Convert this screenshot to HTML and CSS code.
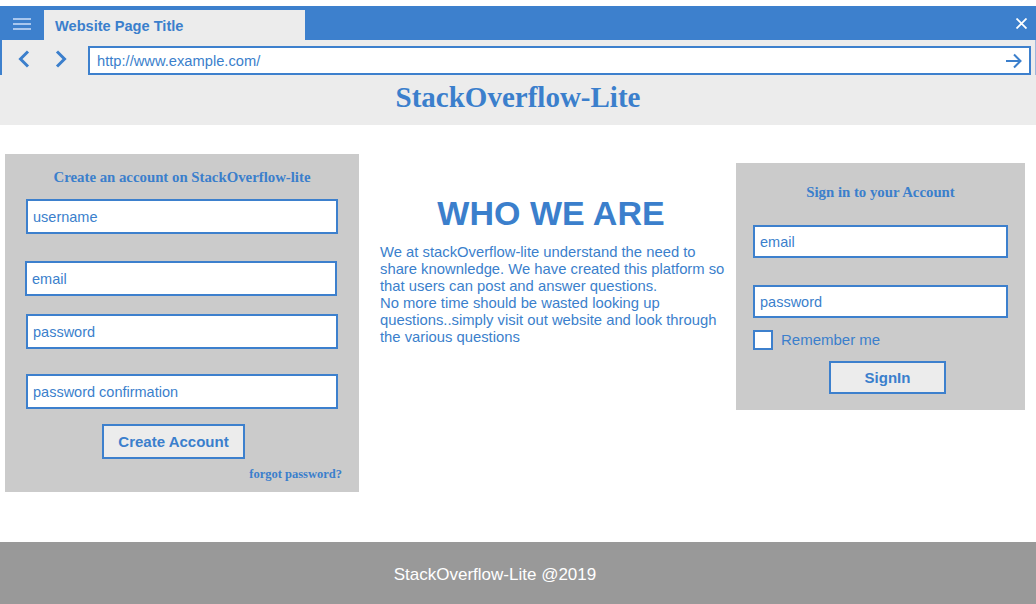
FILE: index.html
```html
<!DOCTYPE html>
<html>
<head>
<meta charset="utf-8">
<title>StackOverflow-Lite</title>
<link rel="stylesheet" href="styles.css">
</head>
<body>
<div class="chrome">
  <div class="titlebar">
    <div class="menu">
      <svg width="18" height="14" viewBox="0 0 18 14"><path d="M0 2h18M0 7h18M0 12h18" stroke="#a9c7ee" stroke-width="2"/></svg>
    </div>
    <div class="tab">Website Page Title</div>
    <div class="close">
      <svg width="11" height="11" viewBox="0 0 11 11"><path d="M0.5 0.5l10 10M10.5 0.5l-10 10" stroke="#fff" stroke-width="1.8"/></svg>
    </div>
  </div>
  <div class="navbar">
    <div class="navbtns">
      <svg width="14" height="18" viewBox="0 0 14 18"><path d="M11 1.5L3.5 9L11 16.5" fill="none" stroke="#3b7fcc" stroke-width="3"/></svg>
      <svg width="14" height="18" viewBox="0 0 14 18"><path d="M3 1.5L10.5 9L3 16.5" fill="none" stroke="#3b7fcc" stroke-width="3"/></svg>
    </div>
    <div class="url">
      <span>http://www.example.com/</span>
      <svg width="16" height="16" viewBox="0 0 16 16"><path d="M0 8h14M8 1.5L14.5 8L8 14.5" fill="none" stroke="#3b7fcc" stroke-width="2"/></svg>
    </div>
  </div>
</div>
<header class="site-header">StackOverflow-Lite</header>
<main class="content">
  <section class="card card-signup">
    <h2 class="card-title">Create an account on StackOverflow-lite</h2>
    <div class="field f-user">username</div>
    <div class="field f-email">email</div>
    <div class="field f-pass">password</div>
    <div class="field f-conf">password confirmation</div>
    <div class="btn btn-create">Create Account</div>
    <div class="forgot">forgot password?</div>
  </section>
  <section class="about">
    <h1 class="about-title">WHO WE ARE</h1>
    <p class="about-text">We at stackOverflow-lite understand the need to share knownledge. We have created this platform so that users can post and answer questions.<br>No more time should be wasted looking up questions..simply visit out website and look through the various questions</p>
  </section>
  <section class="card card-signin">
    <h2 class="card-title">Sign in to your Account</h2>
    <div class="field s-email">email</div>
    <div class="field s-pass">password</div>
    <div class="remember"><span class="check"></span><span>Remember me</span></div>
    <div class="btn btn-signin">SignIn</div>
  </section>
</main>
<footer class="footer">StackOverflow-Lite @2019</footer>
</body>
</html>
```
FILE: styles.css
```css
* { box-sizing: border-box; }
html, body { margin: 0; padding: 0; }
body {
  width: 1036px;
  height: 604px;
  overflow: hidden;
  font-family: "Liberation Sans", Arial, sans-serif;
  color: #3b7fcc;
  background: #fff;
  display: flex;
  flex-direction: column;
}
.chrome { padding-top: 6px; }
.titlebar {
  height: 34px;
  background: #3d80cd;
  display: flex;
  align-items: flex-end;
}
.menu {
  width: 44px;
  height: 34px;
  display: flex;
  align-items: center;
  padding-left: 13px;
  padding-top: 1px;
}
.tab {
  width: 261px;
  height: 30px;
  background: #ececec;
  font-weight: bold;
  font-size: 14.6px;
  padding-left: 11px;
  line-height: 32px;
}
.close {
  margin-left: auto;
  height: 34px;
  display: flex;
  align-items: center;
  padding-right: 9px;
  padding-top: 1px;
}
.navbar {
  height: 35px;
  background: #ececec;
  border-left: 2px solid #3d80cd;
  border-right: 1px solid #9db8dc;
  display: flex;
  align-items: flex-end;
}
.navbtns {
  width: 86px;
  height: 35px;
  display: flex;
  align-items: center;
  gap: 23px;
  padding-left: 15px;
  padding-top: 2px;
}
.url {
  width: 943px;
  height: 29px;
  border: 2px solid #3d80cd;
  background: #fff;
  display: flex;
  align-items: center;
  justify-content: space-between;
  padding: 0 7px 0 7px;
  font-size: 14.7px;
}
.url span { padding-top: 1px; }
.site-header {
  height: 50px;
  background: #ececec;
  text-align: center;
  font-family: "Liberation Serif", serif;
  font-weight: bold;
  font-size: 29px;
  line-height: 44px;
}
.content {
  flex: 1;
  display: flex;
  align-items: flex-start;
}
.card {
  background: #cbcbcb;
}
.card-title {
  margin: 0;
  font-family: "Liberation Serif", serif;
  font-weight: bold;
  font-size: 14.8px;
  text-align: center;
}
.card-signup {
  margin-top: 29px;
  margin-left: 5px;
  width: 354px;
  height: 338px;
  padding: 14px 0 0 21px;
}
.card-signup .card-title { margin-left: -21px; line-height: 18px; }
.field {
  background: #fff;
  border: 2px solid #3d80cd;
  font-size: 14.5px;
  display: flex;
  align-items: center;
  padding-left: 5px;
}
.f-user { width: 312px; height: 35px; margin-top: 13px; }
.f-email { width: 312px; height: 35px; margin-top: 27px; margin-left: -1px; }
.f-pass { width: 312px; height: 35px; margin-top: 18px; }
.f-conf { width: 312px; height: 35px; margin-top: 25px; }
.btn {
  background: #ececec;
  border: 2px solid #3d80cd;
  font-weight: bold;
  font-size: 15px;
  display: flex;
  align-items: center;
  justify-content: center;
}
.btn-create {
  width: 143px;
  height: 35px;
  margin-top: 15px;
  margin-left: 76px;
}
.forgot {
  font-family: "Liberation Serif", serif;
  font-weight: bold;
  font-size: 12.5px;
  text-align: right;
  padding-right: 17px;
  margin-top: 8px;
}
.about {
  width: 377px;
  padding-left: 21px;
  padding-right: 14px;
  margin-top: 70px;
}
.about-title {
  margin: 0;
  font-size: 34px;
  font-weight: bold;
  text-align: center;
  line-height: 36px;
}
.about-text {
  margin: 13px 0 0 0;
  font-size: 14.8px;
  line-height: 17px;
  width: 345px;
}
.card-signin {
  margin-top: 38px;
  margin-left: 0;
  width: 289px;
  height: 247px;
  padding: 21px 0 0 17px;
}
.card-signin .card-title { margin-left: -17px; line-height: 17px; }
.s-email { width: 255px; height: 33px; margin-top: 24px; }
.s-pass { width: 255px; height: 33px; margin-top: 27px; }
.remember {
  display: flex;
  align-items: center;
  gap: 8px;
  margin-top: 12px;
  font-size: 15px;
}
.remember span:last-child { margin-top: -1px; }
.check {
  width: 20px;
  height: 20px;
  background: #fff;
  border: 2px solid #3d80cd;
}
.btn-signin {
  width: 117px;
  height: 33px;
  margin-top: 11px;
  margin-left: 76px;
}
.footer {
  height: 62px;
  background: #999;
  color: #fff;
  text-align: center;
  font-size: 17px;
  line-height: 66px;
  padding-right: 46px;
}
```
